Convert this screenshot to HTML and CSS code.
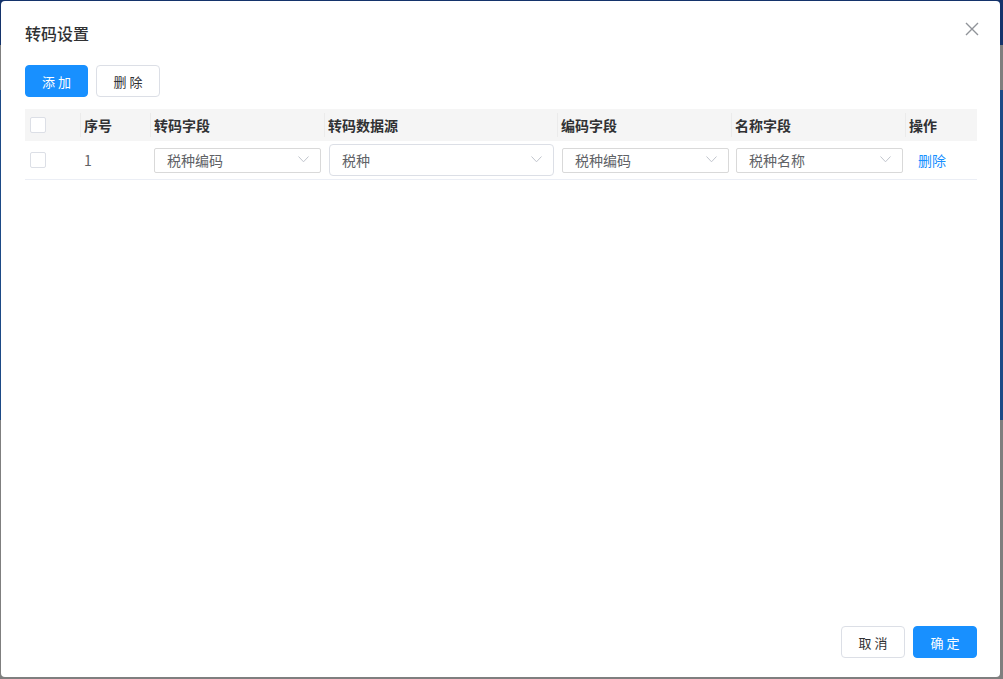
FILE: index.html
```html
<!DOCTYPE html>
<html lang="zh-CN">
<head>
    <meta charset="UTF-8">
    <meta name="viewport" content="width=device-width, initial-scale=1.0">
    <title>转码设置</title>

    <link rel="stylesheet" href="styles.css">

</head>
<body>
    <div class="dialog">
        <div class="dialog-header">
            <span class="dialog-title">转码设置</span>
            <button class="close" aria-label="关闭">
                <svg width="14" height="14" viewBox="0 0 14 14"><path d="M1 1 L13 13 M13 1 L1 13" stroke="#909399" stroke-width="1.4" fill="none"/></svg>
            </button>
        </div>

        <div class="dialog-body">
            <div class="toolbar">
                <button class="btn btn-primary">添 加</button>
                <button class="btn">删 除</button>
            </div>

            <div class="table">
                <div class="row head">
                    <div class="cell"><span class="checkbox"></span></div>
                    <div class="cell">序号</div>
                    <div class="cell">转码字段</div>
                    <div class="cell">转码数据源</div>
                    <div class="cell">编码字段</div>
                    <div class="cell">名称字段</div>
                    <div class="cell">操作</div>
                </div>
                <div class="row">
                    <div class="cell"><span class="checkbox"></span></div>
                    <div class="cell">1</div>
                    <div class="cell">
                        <div class="select">税种编码<svg class="arrow" width="11" height="7" viewBox="0 0 11 7"><path d="M0.5 0.5 L5.5 5.8 L10.5 0.5" stroke="#c0c4cc" fill="none"/></svg></div>
                    </div>
                    <div class="cell">
                        <div class="select select-lg">税种<svg class="arrow" width="11" height="7" viewBox="0 0 11 7"><path d="M0.5 0.5 L5.5 5.8 L10.5 0.5" stroke="#c0c4cc" fill="none"/></svg></div>
                    </div>
                    <div class="cell shift">
                        <div class="select">税种编码<svg class="arrow" width="11" height="7" viewBox="0 0 11 7"><path d="M0.5 0.5 L5.5 5.8 L10.5 0.5" stroke="#c0c4cc" fill="none"/></svg></div>
                    </div>
                    <div class="cell shift">
                        <div class="select">税种名称<svg class="arrow" width="11" height="7" viewBox="0 0 11 7"><path d="M0.5 0.5 L5.5 5.8 L10.5 0.5" stroke="#c0c4cc" fill="none"/></svg></div>
                    </div>
                    <div class="cell"><a class="link" href="#">删除</a></div>
                </div>
            </div>
        </div>

        <div class="dialog-footer">
            <button class="btn">取 消</button>
            <button class="btn btn-primary">确 定</button>
        </div>
    </div>
</body>
</html>
```

FILE: styles.css
```css
body {
    margin: 0;
    padding: 1px 0 0 1px;
    height: 679px;
    box-sizing: border-box;
    overflow: hidden;
    font-family: "Noto Sans CJK SC", "Liberation Sans", sans-serif;
    font-size: 14px;
    color: #606266;
    background: linear-gradient(to bottom, #14336b 0 45px, #7f7f7f 45px 90px, #1d4a86 90px 420px, #7f7f7f 420px);
}
.dialog {
    width: 999px;
    height: 676px;
    background-color: #fff;
    border-radius: 4px;
    display: flex;
    flex-direction: column;
    box-sizing: border-box;
}
.dialog-header {
    display: flex;
    justify-content: space-between;
    align-items: flex-start;
    padding: 20px 21px 0 24px;
    height: 44px;
    box-sizing: border-box;
}
.dialog-title {
    font-size: 16px;
    font-weight: 500;
    color: #303133;
    line-height: 24px;
}
.close {
    border: none;
    background: none;
    padding: 0;
    margin-top: 1px;
    cursor: pointer;
    line-height: 0;
}
.dialog-body {
    flex: 1;
    padding: 20px 23px 0 24px;
}
.toolbar {
    display: flex;
    gap: 8px;
    margin-bottom: 12px;
}
.btn {
    width: 64px;
    height: 32px;
    border: 1px solid #dcdfe6;
    border-radius: 4px;
    background-color: #fff;
    color: #303133;
    font: inherit;
    font-size: 13px;
    padding: 0;
    cursor: pointer;
}
.btn-primary {
    width: 63px;
    background-color: #1890ff;
    border-color: #1890ff;
    color: #fff;
}
.table {
    width: 952px;
}
.row {
    display: grid;
    grid-template-columns: 55px 70px 174px 233px 174px 174px 72px;
    height: 38px;
    align-items: center;
    border-bottom: 1px solid #ebeef5;
}
.row.head {
    height: 32px;
    background-color: #f5f5f5;
    border-bottom: none;
    font-weight: bold;
    color: #303133;
}
.cell {
    padding: 0 3px 0 4px;
    display: flex;
    align-items: center;
    height: 100%;
    box-sizing: border-box;
}
.cell.shift {
    padding: 0 2px 0 5px;
}
.head .cell {
    position: relative;
}
.head .cell + .cell::before {
    content: "";
    position: absolute;
    left: 0;
    top: 4px;
    bottom: 4px;
    border-left: 1px solid #ebebeb;
}
.checkbox {
    display: inline-block;
    width: 14px;
    height: 14px;
    border: 1px solid #dcdfe6;
    border-radius: 2px;
    background-color: #fff;
    margin-left: 1px;
}
.select {
    flex: 1;
    height: 25px;
    border: 1px solid #d9d9d9;
    border-radius: 2px;
    display: flex;
    align-items: center;
    justify-content: space-between;
    padding: 0 11px 0 12px;
    box-sizing: border-box;
    color: #606266;
}
.select-lg {
    height: 32px;
    border-color: #dcdfe6;
    border-radius: 4px;
    margin-left: 1px;
}
.arrow {
    margin-top: -2px;
}
.link {
    color: #1890ff;
    text-decoration: none;
    padding-left: 9px;
}
.dialog-footer {
    display: flex;
    justify-content: flex-end;
    gap: 8px;
    padding: 0 23px 19px 0;
}
.dialog-footer .btn {
    width: 64px;
}
```
